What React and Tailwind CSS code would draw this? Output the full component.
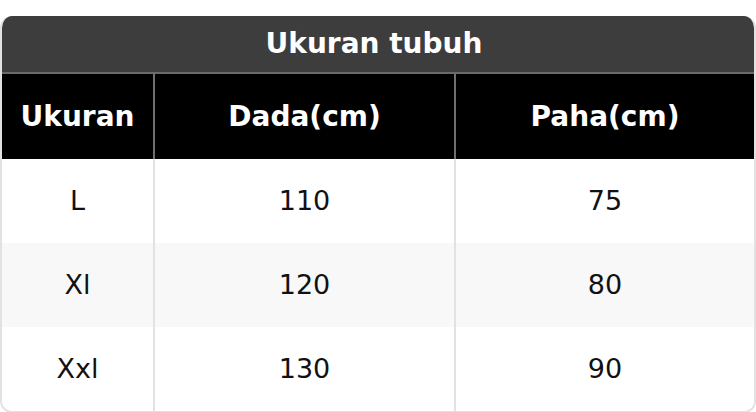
import * as React from "react";

const rows = [
  { size: "L", chest: "110", thigh: "75" },
  { size: "Xl", chest: "120", thigh: "80" },
  { size: "Xxl", chest: "130", thigh: "90" },
];

export default function App() {
  return (
    <div
      className="w-[756px] h-[412px] bg-white pt-4"
      style={{ fontFamily: '"DejaVu Sans", Verdana, sans-serif' }}
    >
      <div className="w-full rounded-xl overflow-hidden border-2 border-t-0 border-[#e2e2e2]">
        <div className="h-[56px] bg-[#3d3d3d] flex items-center justify-center pr-2 text-white font-bold text-[28px] border-b-2 border-[#6a6a6a] box-content">
          Ukuran tubuh
        </div>
        <div className="grid grid-cols-[153px_301px_1fr] h-[85px] bg-black text-white font-bold text-[28px]">
          <div className="flex items-center justify-center border-r-2 border-[#6f6f6f]">Ukuran</div>
          <div className="flex items-center justify-center border-r-2 border-[#6f6f6f]">Dada(cm)</div>
          <div className="flex items-center justify-center">Paha(cm)</div>
        </div>
        {rows.map((r, i) => (
          <div
            key={r.size}
            className={`grid grid-cols-[153px_301px_1fr] h-[84px] text-[27px] text-[#111] ${
              i === 1 ? "bg-[#f8f8f8]" : "bg-white"
            }`}
          >
            <div className="flex items-center justify-center border-r-2 border-[#e2e2e2]">{r.size}</div>
            <div className="flex items-center justify-center border-r-2 border-[#e2e2e2]">{r.chest}</div>
            <div className="flex items-center justify-center">{r.thigh}</div>
          </div>
        ))}
      </div>
    </div>
  );
}
